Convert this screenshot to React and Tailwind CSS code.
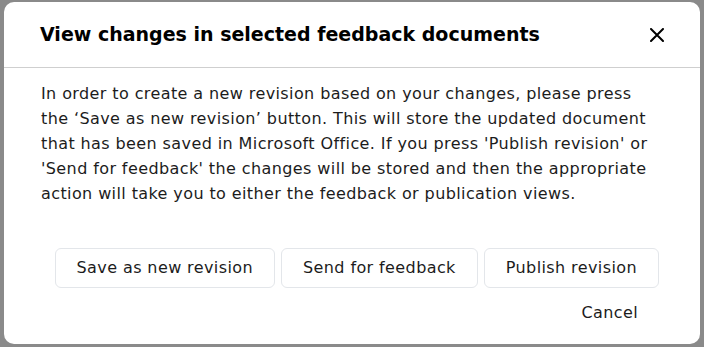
import React from 'react'

const font = { fontFamily: '"DejaVu Sans", "Open Sans", sans-serif' }

export default function App(){
  const buttons = ['Save as new revision', 'Send for feedback', 'Publish revision']
  return (
    <div className="w-[704px] h-[347px] bg-[#8a8a8a] pt-[2px] pl-[4px] pr-[4px] pb-[3px]" style={font}>
      <div className="h-full bg-white rounded-[10px] flex flex-col">
        <div className="flex items-center justify-between pl-[36px] pr-[33px] h-[66px] border-b border-[#cfcfcf]">
          <h2 className="text-[19px] font-bold text-black whitespace-nowrap">View changes in selected feedback documents</h2>
          <button className="w-[20px] h-[20px] flex items-center justify-center text-black" aria-label="Close">
            <svg width="14" height="14" viewBox="0 0 14 14" fill="none" stroke="currentColor" strokeWidth="2" strokeLinecap="round">
              <path d="M1 1L13 13M13 1L1 13" />
            </svg>
          </button>
        </div>
        <div className="pl-[37px] pr-[30px] pt-[13px]">
          <p className="text-[16px] leading-[25px] text-[#1c1c1c] tracking-[0.4px] whitespace-nowrap">
            In order to create a new revision based on your changes, please press<br />
            the ‘Save as new revision’ button. This will store the updated document<br />
            that has been saved in Microsoft Office. If you press 'Publish revision' or<br />
            'Send for feedback' the changes will be stored and then the appropriate<br />
            action will take you to either the feedback or publication views.
          </p>
        </div>
        <div className="flex justify-end gap-[6px] pr-[41px] mt-[42px]">
          {buttons.map(b => (
            <button key={b} className="h-[40px] px-[21px] border border-[#e3e6ea] rounded-[6px] text-[16px] text-[#1c1c1c] tracking-[0.4px]">{b}</button>
          ))}
        </div>
        <div className="flex justify-end pr-[41px] mt-[5px]">
          <button className="h-[40px] px-[21px] text-[16px] text-[#1c1c1c] tracking-[0.4px]">Cancel</button>
        </div>
      </div>
    </div>
  )
}
